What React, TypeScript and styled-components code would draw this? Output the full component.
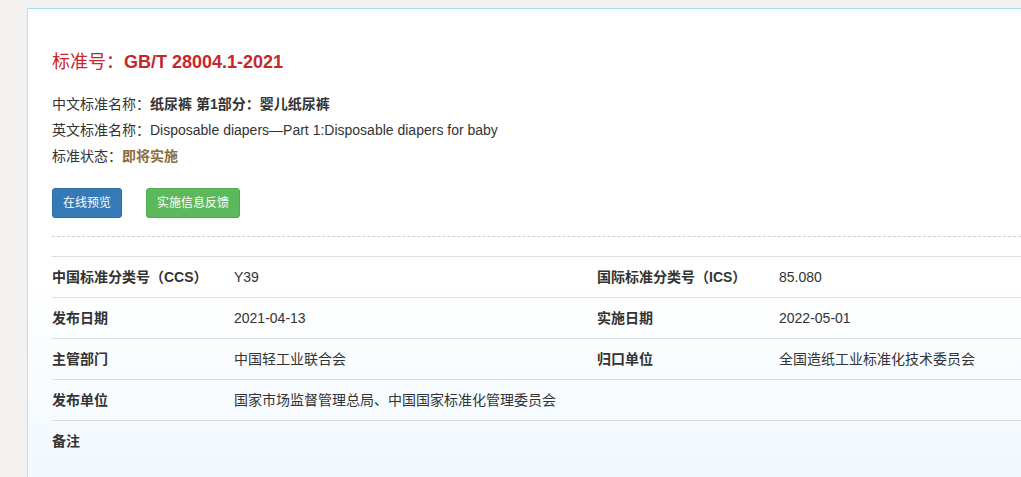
import React from 'react';
import styled, { createGlobalStyle } from 'styled-components';

const GlobalStyle = createGlobalStyle`
  html, body { margin: 0; padding: 0; }
  body {
    background: #f3f2f0;
    font-family: Arial, 'Liberation Sans', 'Noto Sans CJK SC', sans-serif;
    color: #333;
    overflow: hidden;
  }
`;

const Page = styled.div`
  padding: 8px 0 0 27px;
  height: 477px;
  overflow: hidden;
`;

const Panel = styled.div`
  width: 994px;
  min-height: 520px;
  box-sizing: border-box;
  padding: 41px 0 0 24px;
  border-top: 1px solid #a6dcf7;
  border-left: 1px solid #b6def4;
  background: linear-gradient(to bottom, #ffffff 0%, #ffffff 52%, #eef7fe 100%);
`;

const Title = styled.h3`
  margin: 0;
  font-size: 18px;
  line-height: 20px;
  color: #c7262c;
  font-weight: bold;

  span {
    font-weight: normal;
    font-family: 'Noto Sans CJK SC', serif;
  }
`;

const InfoList = styled.div`
  margin-top: 19px;
  font-size: 14px;
  line-height: 26px;
`;

const InfoLine = styled.div`
  white-space: nowrap;
`;

const Value = styled.b<{ tone?: 'warning' }>`
  font-weight: bold;
  color: ${p => (p.tone === 'warning' ? '#8a6d3b' : '#333')};
`;

const Actions = styled.div`
  margin-top: 19px;
  display: flex;
  gap: 24px;
`;

const Button = styled.button<{ variant: 'primary' | 'success' }>`
  font-family: inherit;
  font-size: 12px;
  line-height: 18px;
  padding: 5px 10px;
  border-radius: 3px;
  color: #fff;
  cursor: pointer;
  background: ${p => (p.variant === 'primary' ? '#337ab7' : '#5cb85c')};
  border: 1px solid ${p => (p.variant === 'primary' ? '#2e6da4' : '#4cae4c')};
`;

const Divider = styled.hr`
  margin: 18px 0 19px 0;
  border: 0;
  border-top: 1px dashed #cfcfcf;
`;

const Table = styled.div`
  display: grid;
  grid-template-columns: 182px 363px 182px 1fr;
  font-size: 14px;
  line-height: 20px;
`;

const Cell = styled.div<{ head?: boolean }>`
  padding: 10px 0;
  border-top: 1px solid #ddd;
  font-weight: ${p => (p.head ? 'bold' : 'normal')};
  white-space: nowrap;
`;

const rows: [string, string, string, string][] = [
  ['中国标准分类号（CCS）', 'Y39', '国际标准分类号（ICS）', '85.080'],
  ['发布日期', '2021-04-13', '实施日期', '2022-05-01'],
  ['主管部门', '中国轻工业联合会', '归口单位', '全国造纸工业标准化技术委员会'],
  ['发布单位', '国家市场监督管理总局、中国国家标准化管理委员会', '', ''],
  ['备注', '', '', ''],
];

export default function App() {
  return (
    <>
      <GlobalStyle />
      <Page>
        <Panel>
          <Title>
            <span>标准号：</span>GB/T 28004.1-2021
          </Title>

          <InfoList>
            <InfoLine>
              中文标准名称：<Value>纸尿裤 第1部分：婴儿纸尿裤</Value>
            </InfoLine>
            <InfoLine>英文标准名称：Disposable diapers—Part 1:Disposable diapers for baby</InfoLine>
            <InfoLine>
              标准状态：<Value tone="warning">即将实施</Value>
            </InfoLine>
          </InfoList>

          <Actions>
            <Button variant="primary">在线预览</Button>
            <Button variant="success">实施信息反馈</Button>
          </Actions>

          <Divider />

          <Table>
            {rows.map((r, i) => (
              <React.Fragment key={i}>
                <Cell head>{r[0]}</Cell>
                <Cell>{r[1]}</Cell>
                <Cell head>{r[2]}</Cell>
                <Cell>{r[3]}</Cell>
              </React.Fragment>
            ))}
          </Table>
        </Panel>
      </Page>
    </>
  );
}
